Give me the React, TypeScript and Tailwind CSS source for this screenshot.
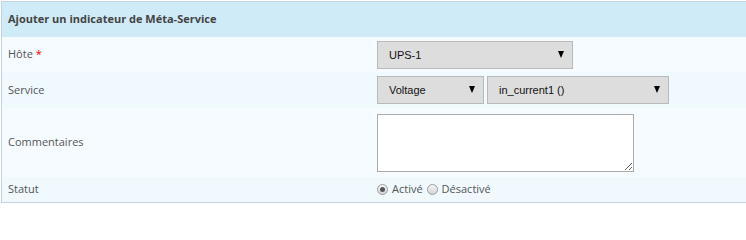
import { useState } from "react";

const label = "font-['Open_Sans',sans-serif] text-[11px] text-[#555]";

function Select({ value, className }: { value: string; className: string }) {
  return (
    <div className={`relative h-[28px] ${className}`}>
      <select
        defaultValue={value}
        className="h-full w-full appearance-none border border-[#b9b9b9] bg-[#dddddd] pl-[11px] font-['Liberation_Sans',Arial,sans-serif] text-[11px] text-[#111] outline-none"
      >
        <option>{value}</option>
      </select>
      <span className="pointer-events-none absolute right-[9px] top-[10px] h-0 w-0 border-x-[3.5px] border-t-[7px] border-x-transparent border-t-black" />
    </div>
  );
}

function Radio({ checked, text, onClick }: { checked: boolean; text: string; onClick: () => void }) {
  return (
    <label className="flex cursor-pointer items-center gap-[4px]" onClick={onClick}>
      <span className="flex h-[11px] w-[11px] items-center justify-center rounded-full border border-[#9d9d9d] bg-gradient-to-b from-[#f4f4f4] to-[#d6d6d6]">
        {checked && <span className="h-[5px] w-[5px] rounded-full bg-[#555]" />}
      </span>
      <span className={label}>{text}</span>
    </label>
  );
}

export default function App() {
  const [active, setActive] = useState(true);

  return (
    <div className="bg-white pt-[1px] pb-[1px]">
      <div className="ml-[1px] border-y border-l border-[#c3d3e0]">
        <div className="flex h-[35px] items-center bg-[#cfebf7] pl-[6px]">
          <h3 className="font-['Open_Sans',sans-serif] text-[11px] font-bold text-[#444]">
            Ajouter un indicateur de Méta-Service
          </h3>
        </div>

        <div className="grid h-[35px] grid-cols-[372px_1fr] items-center bg-[#f5fbfe]">
          <div className={`pl-[6px] ${label}`}>
            Hôte <span className="text-[#e00]">*</span>
          </div>
          <div className="pl-[3px]">
            <Select value="UPS-1" className="w-[196px]" />
          </div>
        </div>

        <div className="grid h-[36px] grid-cols-[372px_1fr] items-center bg-[#eff9fe]">
          <div className={`pl-[6px] ${label}`}>Service</div>
          <div className="flex gap-[3px] pl-[3px]">
            <Select value="Voltage" className="w-[107px]" />
            <Select value="in_current1 ()" className="w-[182px]" />
          </div>
        </div>

        <div className="grid h-[69px] grid-cols-[372px_1fr] items-center bg-[#f5fbfe]">
          <div className={`pl-[6px] ${label}`}>Commentaires</div>
          <div className="pl-[3px]">
            <textarea className="block h-[58px] w-[257px] border border-[#ababab] bg-white outline-none" />
          </div>
        </div>

        <div className="grid h-[25px] grid-cols-[372px_1fr] items-center bg-[#eff9fe]">
          <div className={`pl-[6px] ${label}`}>Statut</div>
          <div className="flex items-center gap-[4px] pl-[3px]">
            <Radio checked={active} text="Activé" onClick={() => setActive(true)} />
            <Radio checked={!active} text="Désactivé" onClick={() => setActive(false)} />
          </div>
        </div>
      </div>
    </div>
  );
}
